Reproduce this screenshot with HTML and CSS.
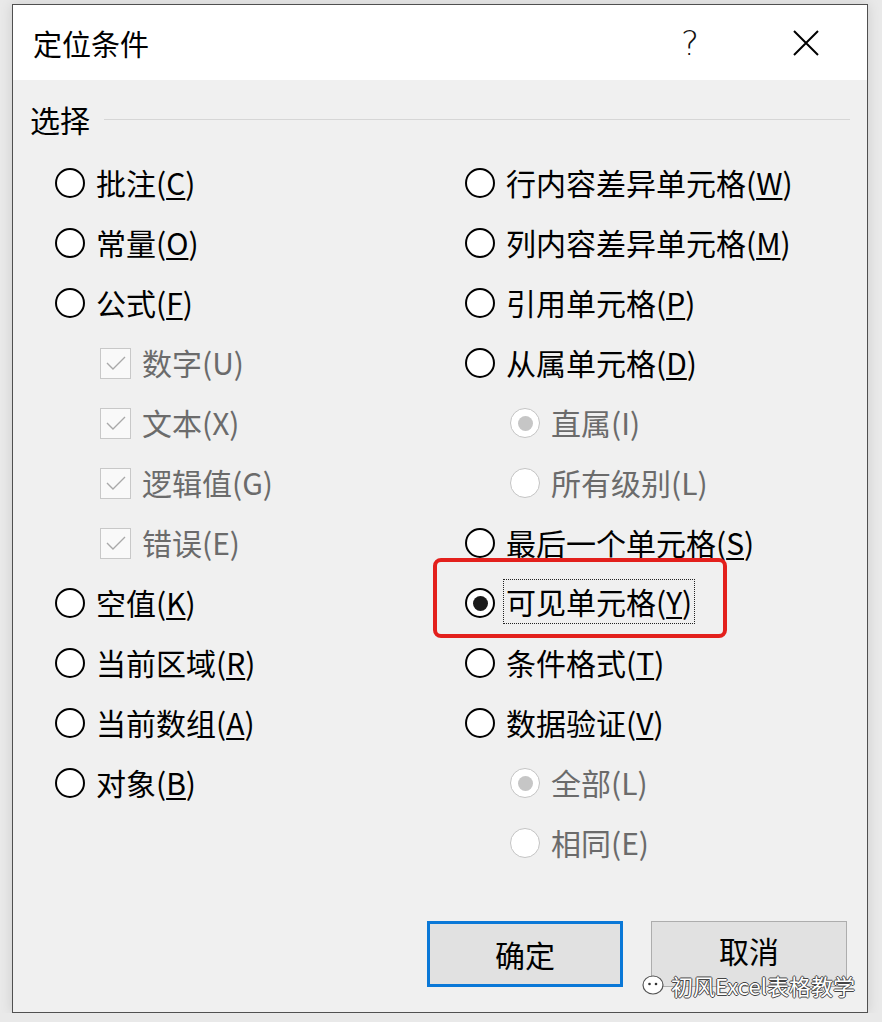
FILE: index.html
```html
<!DOCTYPE html>
<html lang="zh-CN">
<head>
  <meta charset="UTF-8">
  <title>定位条件</title>
  <link rel="stylesheet" href="styles.css">
</head>
<body>
  <div class="dialog">
    <div class="titlebar">
      <div class="title">定位条件</div>
      <button class="title-btn help">?</button>
      <button class="title-btn close">
        <svg width="26" height="26" viewBox="0 0 26 26"><path d="M1 1 L25 25 M25 1 L1 25" stroke="#000" stroke-width="2" fill="none"/></svg>
      </button>
    </div>

    <div class="content">
      <div class="group-head">
        <span>选择</span>
        <div class="group-line"></div>
      </div>

      <div class="options">
        <div class="col">
          <div class="opt"><span class="radio"></span><span>批注(<u>C</u>)</span></div>
          <div class="opt"><span class="radio"></span><span>常量(<u>O</u>)</span></div>
          <div class="opt"><span class="radio"></span><span>公式(<u>F</u>)</span></div>
          <div class="opt sub"><span class="check"><svg width="20" height="14" viewBox="0 0 20 14"><path d="M1 7 L7 13 L19 1" stroke="#a9a9a9" stroke-width="1.4" fill="none"/></svg></span><span>数字(U)</span></div>
          <div class="opt sub"><span class="check"><svg width="20" height="14" viewBox="0 0 20 14"><path d="M1 7 L7 13 L19 1" stroke="#a9a9a9" stroke-width="1.4" fill="none"/></svg></span><span>文本(X)</span></div>
          <div class="opt sub"><span class="check"><svg width="20" height="14" viewBox="0 0 20 14"><path d="M1 7 L7 13 L19 1" stroke="#a9a9a9" stroke-width="1.4" fill="none"/></svg></span><span>逻辑值(G)</span></div>
          <div class="opt sub"><span class="check"><svg width="20" height="14" viewBox="0 0 20 14"><path d="M1 7 L7 13 L19 1" stroke="#a9a9a9" stroke-width="1.4" fill="none"/></svg></span><span>错误(E)</span></div>
          <div class="opt"><span class="radio"></span><span>空值(<u>K</u>)</span></div>
          <div class="opt"><span class="radio"></span><span>当前区域(<u>R</u>)</span></div>
          <div class="opt"><span class="radio"></span><span>当前数组(<u>A</u>)</span></div>
          <div class="opt"><span class="radio"></span><span>对象(<u>B</u>)</span></div>
        </div>

        <div class="col">
          <div class="opt"><span class="radio"></span><span>行内容差异单元格(<u>W</u>)</span></div>
          <div class="opt"><span class="radio"></span><span>列内容差异单元格(<u>M</u>)</span></div>
          <div class="opt"><span class="radio"></span><span>引用单元格(<u>P</u>)</span></div>
          <div class="opt"><span class="radio"></span><span>从属单元格(<u>D</u>)</span></div>
          <div class="opt sub"><span class="radio dim checked"></span><span>直属(I)</span></div>
          <div class="opt sub"><span class="radio dim"></span><span>所有级别(L)</span></div>
          <div class="opt"><span class="radio"></span><span>最后一个单元格(<u>S</u>)</span></div>
          <div class="opt highlight"><span class="radio checked"></span><span class="focus">可见单元格(<u>Y</u>)</span><div class="mark"></div></div>
          <div class="opt"><span class="radio"></span><span>条件格式(<u>T</u>)</span></div>
          <div class="opt"><span class="radio"></span><span>数据验证(<u>V</u>)</span></div>
          <div class="opt sub"><span class="radio dim checked"></span><span>全部(L)</span></div>
          <div class="opt sub"><span class="radio dim"></span><span>相同(E)</span></div>
        </div>
      </div>
    </div>

    <div class="footer">
      <button class="btn primary">确定</button>
      <button class="btn cancel">取消</button>
      <div class="watermark">
        <svg width="26" height="22" viewBox="0 0 26 22"><ellipse cx="12" cy="11" rx="10" ry="9" fill="#fff" stroke="#555" stroke-width="1.2"/><circle cx="8.5" cy="10" r="1.3" fill="#333"/><circle cx="15" cy="10" r="1.3" fill="#333"/></svg>
        <span>初风Excel表格教学</span>
      </div>
    </div>
  </div>
</body>
</html>
```

FILE: styles.css
```css
body {
    margin: 0;
    background: #e9e9e9;
    font-family: "Noto Sans CJK SC", "Noto Sans", sans-serif;
}
.dialog {
    box-sizing: border-box;
    width: 856px;
    height: 1009px;
    margin: 4px 0 0 12px;
    border: 1px solid #505050;
    background: #f0f0f0;
    box-shadow: 0 0 12px rgba(0, 0, 0, 0.12);
    display: flex;
    flex-direction: column;
}
.titlebar {
    height: 75px;
    background: #fff;
    display: flex;
    align-items: center;
    padding: 0 31px 0 20px;
}
.title {
    flex: 1;
    font-size: 29px;
    color: #000;
}
.title-btn {
    width: 60px;
    height: 60px;
    border: none;
    background: none;
    padding: 0;
    display: flex;
    align-items: center;
    justify-content: center;
    font-family: "DejaVu Sans", sans-serif;
    font-weight: 200;
    font-size: 34px;
    color: #111;
}
.help {
    margin-right: 56px;
}
.content {
    padding: 18px 17px 0 17px;
}
.group-head {
    height: 42px;
    display: flex;
    align-items: center;
    gap: 14px;
    font-size: 30px;
}
.group-line {
    flex: 1;
    height: 1px;
    background: #d6d6d6;
}
.options {
    display: grid;
    grid-template-columns: 410px 1fr;
    margin-top: 13px;
    padding-left: 25px;
}
.col {
    display: flex;
    flex-direction: column;
}
.opt {
    position: relative;
    height: 60px;
    display: flex;
    align-items: center;
    gap: 11px;
    font-size: 30px;
    line-height: 40px;
    color: #000;
}
.opt > span:not(.radio):not(.check) {
    margin-top: -3px;
}
.opt u {
    text-underline-offset: 3px;
    text-decoration-thickness: 2px;
}
.opt.sub {
    padding-left: 45px;
    color: #6b6b6b;
}
.radio {
    box-sizing: border-box;
    width: 30px;
    height: 30px;
    flex-shrink: 0;
    border: 2px solid #000;
    border-radius: 50%;
    background: #fff;
    display: flex;
    align-items: center;
    justify-content: center;
}
.radio.checked::after {
    content: "";
    width: 15px;
    height: 15px;
    border-radius: 50%;
    background: #1a1a1a;
}
.radio.dim {
    border: 1.5px solid #c4c4c4;
}
.radio.dim.checked::after {
    background: #c6c6c6;
}
.check {
    box-sizing: border-box;
    width: 31px;
    height: 31px;
    flex-shrink: 0;
    border: 1.5px solid #c8c8c8;
    background: #f9f9f9;
    display: flex;
    align-items: center;
    justify-content: center;
}
.focus {
    padding: 0 2px;
    margin-left: -3px;
    border: 1px dotted #222;
    line-height: 43px;
}
.mark {
    position: absolute;
    left: -32px;
    top: -15px;
    width: 294px;
    height: 80px;
    box-sizing: border-box;
    border: 4px solid #e3201c;
    border-radius: 8px;
}
.footer {
    position: relative;
    display: flex;
    justify-content: flex-end;
    gap: 28px;
    margin-top: 48px;
    padding-right: 20px;
}
.btn {
    box-sizing: border-box;
    width: 196px;
    height: 66px;
    background: #e1e1e1;
    border: 1.5px solid #adadad;
    font-family: "Noto Sans CJK SC", sans-serif;
    font-size: 30px;
    line-height: 40px;
    color: #000;
    padding: 0;
}
.btn.primary {
    border: 3px solid #0a78d7;
}
.btn.cancel {
    padding-bottom: 8px;
}
.watermark {
    position: absolute;
    right: 12px;
    top: 52px;
    display: flex;
    align-items: center;
    gap: 4px;
    font-size: 22px;
    line-height: 24px;
    color: #fff;
    text-shadow: 1px 0 0 #444, -1px 0 0 #444, 0 1px 0 #444, 0 -1px 0 #444;
}
```
